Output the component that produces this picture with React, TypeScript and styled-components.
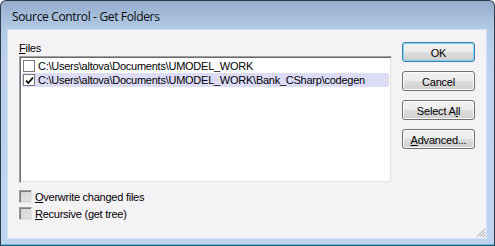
import styled, { createGlobalStyle } from "styled-components";

/* ─────────────────── data ─────────────────── */

const files = [
  { path: "C:\\Users\\altova\\Documents\\UMODEL_WORK", checked: false },
  { path: "C:\\Users\\altova\\Documents\\UMODEL_WORK\\Bank_CSharp\\codegen", checked: true },
];

/* ─────────────────── component ─────────────────── */

export default function App() {
  return (
    <>
      <Global />
      <Window>
        <TitleBar>Source Control - Get Folders</TitleBar>
        <Client>
          <LeftCol>
            <Label>
              <u>F</u>iles
            </Label>
            <ListBox>
              {files.map((f) => (
                <Row key={f.path} selected={f.checked}>
                  <ListCheck>
                    {f.checked && (
                      <svg width="9" height="9" viewBox="0 0 9 9">
                        <path d="M1 4.5 L3.3 7 L8 1.5" stroke="#000" strokeWidth="1.8" fill="none" />
                      </svg>
                    )}
                  </ListCheck>
                  <span>{f.path}</span>
                </Row>
              ))}
            </ListBox>
            <Options>
              <Option>
                <Box3D />
                <span>
                  <u>O</u>verwrite changed files
                </span>
              </Option>
              <Option>
                <Box3D />
                <span>
                  <u>R</u>ecursive (get tree)
                </span>
              </Option>
            </Options>
          </LeftCol>
          <Buttons>
            <Button primary>OK</Button>
            <Button>Cancel</Button>
            <Button>
              Select A<u>l</u>l
            </Button>
            <Button>
              <u>A</u>dvanced...
            </Button>
          </Buttons>
          <Grip width="10" height="10" viewBox="0 0 10 10">
            <path d="M9 1 L1 9 M9 4 L4 9 M9 7 L7 9" stroke="#a5a5a5" strokeWidth="1.2" strokeDasharray="1 0.6" />
          </Grip>
        </Client>
      </Window>
    </>
  );
}

/* ───────────── styled components ───────────── */

const Global = createGlobalStyle`
  html, body {
    margin: 0;
    padding: 0;
    background: #ffffff;
  }
  body {
    font-family: "Liberation Sans", Arial, sans-serif;
    font-size: 11px;
    letter-spacing: -0.25px;
    color: #000;
  }
  u {
    text-decoration: underline;
    text-underline-offset: 1px;
  }
`;

const Window = styled.div`
  box-sizing: border-box;
  width: 495px;
  height: 246px;
  display: flex;
  flex-direction: column;
  border: 1px solid #2f3b4a;
  border-bottom-color: #1d5c78;
  border-radius: 6px 6px 0 0;
  padding: 0 8px 7px 7px;
  background: linear-gradient(#95adcd 0px, #b3cae6 28px, #bcd2ee 60px, #bdd3ee 100%);
  box-shadow: inset 0 -1px 0 #6fb7d8;
`;

const TitleBar = styled.div`
  height: 29px;
  display: flex;
  align-items: center;
  padding: 1px 0 0 4px;
  box-sizing: border-box;
  font-family: "Open Sans", "Noto Sans", sans-serif;
  font-size: 12px;
  letter-spacing: -0.35px;
  color: #0a0a0a;
`;

const Client = styled.div`
  position: relative;
  flex: 1;
  display: flex;
  gap: 10px;
  padding: 12px 11px 0 11px;
  background: #f5f2f6;
  box-shadow: 0 0 0 1px rgba(255, 255, 255, 0.35);
`;

const LeftCol = styled.div`
  width: 373px;
  display: flex;
  flex-direction: column;
`;

const Label = styled.div`
  height: 14px;
  line-height: 13px;
`;

const ListBox = styled.div`
  box-sizing: border-box;
  height: 127px;
  background: #fff;
  border: 1px solid;
  border-color: #a0a0a0 #f2f2f2 #f2f2f2 #a0a0a0;
  box-shadow: inset 1px 1px 0 #696969, inset -1px -1px 0 #e3e3e3;
  padding: 2px 2px;
`;

const Row = styled.div<{ selected?: boolean }>`
  height: 14px;
  display: flex;
  align-items: center;
  gap: 3px;
  padding-left: 1px;
  background: ${(p) => (p.selected ? "#dcdcf7" : "transparent")};
  white-space: nowrap;
`;

const ListCheck = styled.div`
  box-sizing: border-box;
  width: 12px;
  height: 12px;
  border: 1px solid #7a7a7a;
  background: #fff;
  display: flex;
  align-items: center;
  justify-content: center;
`;

const Options = styled.div`
  margin-top: 5px;
  display: flex;
  flex-direction: column;
`;

const Option = styled.div`
  height: 17px;
  display: flex;
  align-items: center;
  gap: 3px;
`;

const Box3D = styled.div`
  box-sizing: border-box;
  width: 13px;
  height: 13px;
  border: 1px solid;
  border-color: #9a9a9a #e6e6e6 #e6e6e6 #9a9a9a;
  box-shadow: inset 1px 1px 0 #7d7d7d, inset -1px -1px 0 #d4d4d4;
  background: linear-gradient(135deg, #d2d2d2, #e6e6e6);
`;

const Buttons = styled.div`
  display: flex;
  flex-direction: column;
  gap: 9px;
`;

const Button = styled.button<{ primary?: boolean }>`
  box-sizing: border-box;
  width: 73px;
  height: 20px;
  padding: 1px 0 0;
  font-family: "Liberation Sans", Arial, sans-serif;
  font-size: 11px;
  letter-spacing: -0.2px;
  color: #000;
  border-radius: 3px;
  border: 1px solid ${(p) => (p.primary ? "#3c7fb1" : "#707070")};
  background: linear-gradient(#f2f2f2 0%, #ebebeb 50%, #dddddd 51%, #cfcfcf 100%);
  box-shadow: inset 0 0 0 1px ${(p) => (p.primary ? "#7ed3f5" : "#fbfbfb")};
`;

const Grip = styled.svg`
  position: absolute;
  right: 0;
  bottom: 0;
`;
